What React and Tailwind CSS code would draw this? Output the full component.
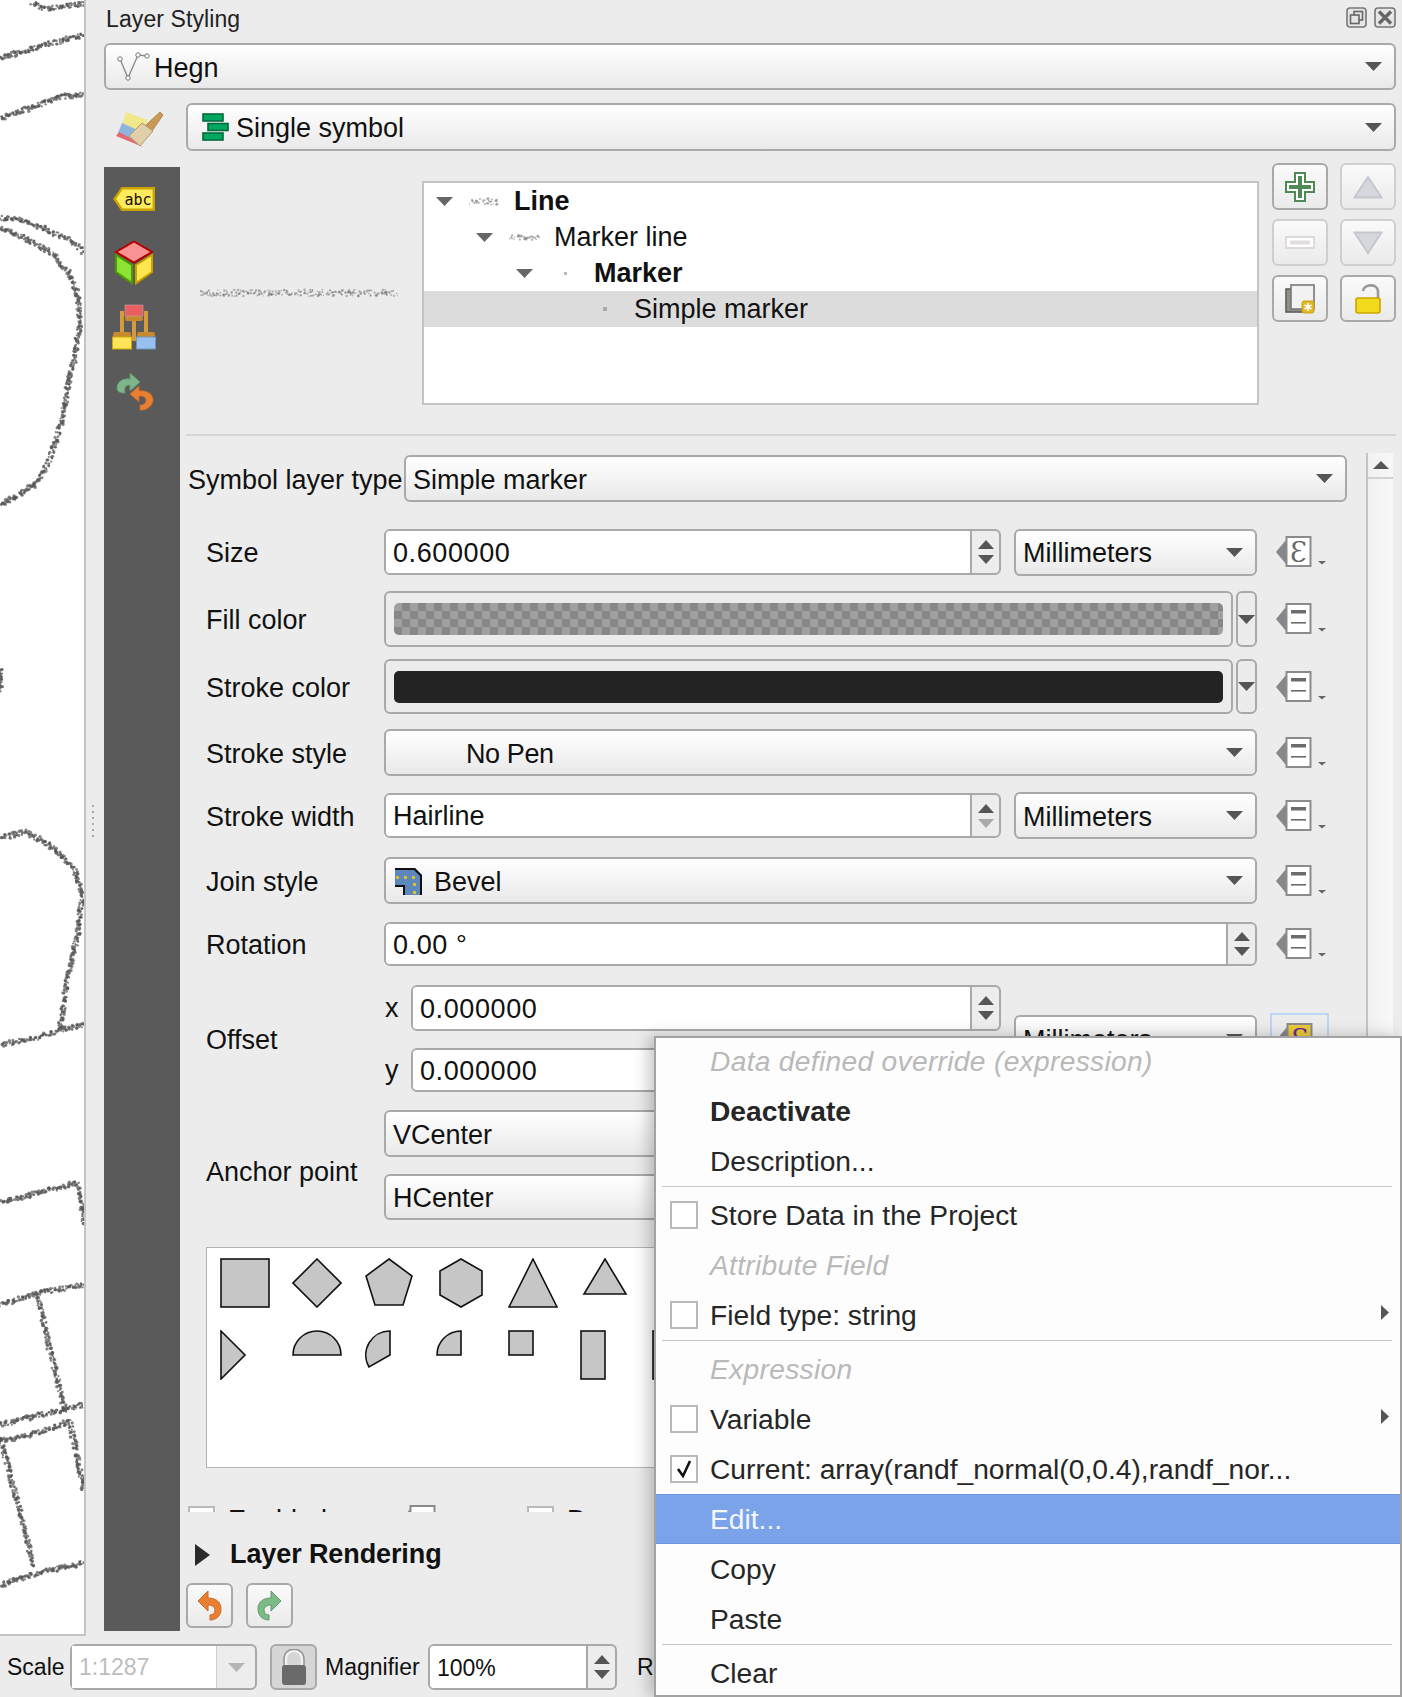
const FONT = { fontFamily: '"Liberation Sans", Arial, sans-serif' }

// seeded random so the stippled lines stay put between renders
function rng(seed) {
  let s = seed
  return () => {
    s = (s * 16807) % 2147483647
    return s / 2147483647
  }
}

function stipple(points, seed, jitter = 2.4, step = 0.8, r = 1.35) {
  const rand = rng(seed)
  const dots = []
  for (let i = 0; i < points.length - 1; i++) {
    const [x1, y1] = points[i]
    const [x2, y2] = points[i + 1]
    const len = Math.hypot(x2 - x1, y2 - y1)
    const n = Math.ceil(len / step)
    for (let k = 0; k < n; k++) {
      const t = k / n
      dots.push({
        x: x1 + (x2 - x1) * t + (rand() - 0.5) * jitter * 2,
        y: y1 + (y2 - y1) * t + (rand() - 0.5) * jitter * 2,
        r: r * (0.7 + rand() * 0.6),
      })
    }
  }
  return dots
}

const MAP_LINES = [
  [[33, 3], [45, 9], [60, 7], [84, 3]],
  [[0, 58], [20, 52], [45, 45], [65, 40], [84, 35]],
  [[0, 118], [30, 108], [60, 97], [84, 94]],
  [[0, 218], [17, 219], [40, 227], [70, 240], [84, 252]],
  [[0, 228], [25, 238], [50, 252], [68, 272], [78, 295], [80, 325], [75, 355], [68, 385], [62, 420], [50, 460], [35, 485], [15, 497], [0, 505]],
  [[0, 668], [1, 690]],
  [[0, 838], [25, 832], [50, 845], [75, 870], [82, 895], [78, 935], [68, 975], [60, 1028]],
  [[0, 1045], [40, 1037], [60, 1030], [84, 1025]],
  [[0, 1203], [40, 1192], [76, 1183], [81, 1200], [84, 1225]],
  [[0, 1305], [40, 1292], [84, 1285]],
  [[38, 1295], [50, 1350], [65, 1410]],
  [[0, 1425], [40, 1415], [84, 1405]],
  [[0, 1442], [40, 1432], [70, 1421], [84, 1491]],
  [[0, 1437], [20, 1512], [33, 1566]],
  [[0, 1585], [33, 1574], [84, 1563]],
]

function MapCanvas() {
  return (
    <svg width="84" height="1634" className="block">
      {MAP_LINES.map((line, i) =>
        stipple(line, 97 + i * 131).map((d, j) => (
          <circle key={`${i}-${j}`} cx={d.x} cy={d.y} r={d.r} fill="#555" opacity="0.72" />
        ))
      )}
    </svg>
  )
}

function Squiggle({ width, height, seed, r = 1 }) {
  const dots = stipple([[2, height / 2], [width - 2, height / 2]], seed, height / 3, 0.8, r)
  return (
    <svg width={width} height={height} className="block shrink-0">
      {dots.map((d, i) => <circle key={i} cx={d.x} cy={d.y} r={d.r} fill="#777" opacity="0.55" />)}
    </svg>
  )
}

const Caret = ({ color = '#555' }) => (
  <svg width="17" height="9" viewBox="0 0 17 9" className="block shrink-0"><path d="M0 0H17L8.5 9Z" fill={color} /></svg>
)

const Label = ({ children }) => <div className="w-[178px] shrink-0 pt-[3px] whitespace-nowrap">{children}</div>

function Combo({ className, children, pad = 'pl-[7px]' }) {
  return (
    <div className={`flex items-center justify-between rounded-[6px] border-2 border-[#a9a9a9] bg-gradient-to-b from-white to-[#e9e9e9] pr-[12px] ${pad} ${className}`}>
      <div className="flex items-center pt-[3px]">{children}</div>
      <Caret />
    </div>
  )
}

function Spin({ className, value, lowDim, numeric }) {
  return (
    <div className={`flex items-stretch rounded-[6px] border-2 border-[#a9a9a9] bg-[#ededed] ${className}`}>
      <div className={`flex-1 flex items-center bg-white rounded-l-[4px] pl-[7px] pt-[2px] border-r-2 border-[#a9a9a9] ${numeric ? 'tracking-[0.6px]' : ''}`}>{value}</div>
      <div className="w-[27px] flex flex-col items-center justify-center gap-[6px]">
        <svg width="16" height="9" viewBox="0 0 16 9" className="block"><path d="M0 9H16L8 0Z" fill="#555" /></svg>
        <svg width="16" height="9" viewBox="0 0 16 9" className="block"><path d="M0 0H16L8 9Z" fill={lowDim ? '#aaa' : '#555'} /></svg>
      </div>
    </div>
  )
}

function DDIcon({ expr }) {
  return (
    <svg width="52" height="34" viewBox="0 0 52 34" className="block shrink-0">
      <path d="M0 17L10 5V29Z" fill="#85878a" />
      <rect x="10.5" y="2" width="24" height="29" fill="#fff" stroke="#8b8b8b" strokeWidth="2" />
      {expr ? (
        <text x="22.5" y="27" textAnchor="middle" fontFamily="DejaVu Serif, serif" fontSize="27" fill="#666">Ɛ</text>
      ) : (
        <g>
          <rect x="15" y="8" width="15" height="3.5" fill="#6b6b6b" />
          <rect x="15" y="20" width="15" height="1.6" fill="#6b6b6b" />
        </g>
      )}
      <path d="M42 26H50L46 29.5Z" fill="#666" />
    </svg>
  )
}

function ToolBtn({ dim, children }) {
  return (
    <div className={`w-[56px] h-[47px] flex items-center justify-center rounded-[6px] border-2 bg-gradient-to-b from-[#fafafa] to-[#eaeaea] ${dim ? 'border-[#cfcfcf]' : 'border-[#a9a9a9]'}`}>
      {children}
    </div>
  )
}

const TREE = [
  { label: 'Line', bold: true, pad: 'pl-[12px]', icon: <Squiggle width={32} height={9} seed={11} />, arrow: true },
  { label: 'Marker line', pad: 'pl-[52px]', icon: <Squiggle width={32} height={7} seed={29} />, arrow: true },
  { label: 'Marker', bold: true, pad: 'pl-[92px]', icon: <div className="w-[3px] h-[3px] mx-auto bg-[#bbb]" />, arrow: true },
  { label: 'Simple marker', pad: 'pl-[132px]', icon: <div className="w-[4px] h-[4px] mx-auto bg-[#aaa]" />, selected: true },
]

const SYMBOLS = [
  <rect x="1" y="1" width="48" height="48" />,
  <path d="M25 1L49 25L25 49L1 25Z" />,
  <path d="M25 1L48 18L39 47H11L2 18Z" />,
  <path d="M25 1L46 13V37L25 49L4 37V13Z" />,
  <path d="M25 1L49 49H1Z" />,
  <path d="M25 1L46 36H4Z" />,
  <path d="M25 1L49 25L25 49Z" />,
  <path d="M1 1L25 25L1 49Z" />,
  <path d="M1 25A24 24 0 0 1 49 25Z" />,
  <path d="M26 1V25L5 37A24 24 0 0 1 26 1Z" />,
  <path d="M25 1V25H1A24 24 0 0 1 25 1Z" />,
  <rect x="1" y="1" width="24" height="24" />,
  <rect x="1" y="1" width="24" height="48" />,
  <rect x="1" y="1" width="24" height="48" />,
]

const MENU = [
  { label: 'Data defined override (expression)', off: true },
  { label: 'Deactivate', bold: true },
  { label: 'Description...', rule: true },
  { label: 'Store Data in the Project', box: true },
  { label: 'Attribute Field', off: true },
  { label: 'Field type: string', box: true, sub: true, rule: true },
  { label: 'Expression', off: true },
  { label: 'Variable', box: true, sub: true },
  { label: 'Current: array(randf_normal(0,0.4),randf_nor...', box: true, checked: true },
  { label: 'Edit...', hot: true },
  { label: 'Copy' },
  { label: 'Paste', rule: true },
  { label: 'Clear' },
]

function ContextMenu() {
  return (
    <div className="absolute left-[654px] top-[1036px] w-[748px] h-[661px] bg-[#fdfdfd] border-2 border-[#a2a2a2] shadow-[-6px_0_14px_rgba(0,0,0,0.22)] text-[28.2px] text-[#262626]">
      <div className="-mt-[2px]">
        {MENU.map(item => (
          <div key={item.label}>
            <div className={`relative h-[50px] flex items-center pl-[54px] ${item.hot ? 'bg-[#7ba3ea] text-[#f4f7fd] border-y border-[#6f97df]' : ''}`}>
              {item.box && (
                <div className="absolute left-[14px] top-[11px] w-[28px] h-[28px] border-2 border-[#b9b9b9] bg-white flex items-center justify-center">
                  {item.checked && (
                    <svg width="18" height="20" viewBox="0 0 18 20"><path d="M3 10L8 17L15 2" fill="none" stroke="#111" strokeWidth="2.6" /></svg>
                  )}
                </div>
              )}
              <span className={`whitespace-nowrap ${item.off ? 'italic text-[#b9b9b9] tracking-[0.3px]' : ''} ${item.bold ? 'font-bold' : ''}`}>{item.label}</span>
              {item.sub && (
                <svg width="8" height="15" viewBox="0 0 8 15" className="absolute right-[11px] top-[15px]"><path d="M0 0L8 7.5L0 15Z" fill="#555" /></svg>
              )}
            </div>
            {item.rule && <div className="ml-[6px] mr-[8px] mb-[3px] h-[1px] bg-[#c6c6c6]" />}
          </div>
        ))}
      </div>
    </div>
  )
}

export default function App() {
  return (
    <div className="relative w-[1402px] h-[1697px] overflow-hidden bg-[#ececec] text-[27px] text-[#111] leading-none" style={FONT}>
      <div className="flex h-[1636px]">
        <div className="w-[86px] h-[1636px] shrink-0 bg-white border-r-2 border-b-2 border-[#c4c4c4]">
          <MapCanvas />
        </div>

        <div className="relative flex-1 flex flex-col pl-[18px] pr-[6px]">
          {/* grip between the map and the dock */}
          <div className="absolute left-[6px] top-[805px] flex flex-col gap-[4px]">
            {[0, 1, 2, 3, 4, 5].map(i => <div key={i} className="w-[2px] h-[2px] bg-[#a8a8a8]" />)}
          </div>

          <div className="h-[43px] flex items-start justify-between pt-[8px]">
            <div className="pl-[2px] text-[23px] tracking-[0.1px] text-[#222]">Layer Styling</div>
            <div className="flex gap-[7px] -mt-[1px]">
              <svg width="21" height="21" viewBox="0 0 21 21" className="block">
                <rect x="1" y="1" width="19" height="19" rx="3" fill="#e6e6e6" stroke="#777" strokeWidth="1.6" />
                <rect x="8" y="4.5" width="8.5" height="8.5" fill="none" stroke="#666" strokeWidth="1.6" />
                <rect x="4.5" y="8" width="8.5" height="8.5" fill="#e6e6e6" stroke="#666" strokeWidth="1.6" />
              </svg>
              <svg width="22" height="21" viewBox="0 0 22 21" className="block">
                <rect x="1" y="1" width="20" height="19" rx="3" fill="#e6e6e6" stroke="#777" strokeWidth="1.6" />
                <path d="M5 4.5L17 16.5M17 4.5L5 16.5" stroke="#666" strokeWidth="3.4" />
              </svg>
            </div>
          </div>

          <Combo className="h-[47px]">
            <svg width="34" height="30" viewBox="0 0 34 30" className="block mr-[4px] ml-[3px] -mt-[3px]">
              <path d="M4 7L12 26L22 3L32 4" fill="none" stroke="#888" strokeWidth="1.3" />
              <circle cx="4" cy="7" r="2.2" fill="#fff" stroke="#777" />
              <circle cx="12" cy="26" r="2.2" fill="#fff" stroke="#777" />
              <circle cx="22" cy="3" r="2.2" fill="#fff" stroke="#777" />
              <circle cx="31" cy="4" r="2.2" fill="#fff" stroke="#777" />
            </svg>
            <span>Hegn</span>
          </Combo>

          <div className="flex items-center mt-[13px] h-[48px]">
            <svg width="48" height="38" viewBox="0 0 48 38" className="block ml-[12px] mr-[22px] mt-[6px] shrink-0">
              <path d="M10 1L32 9L24 22L6 14Z" fill="#f0e88a" />
              <path d="M6 12L24 20L17 30L2 22Z" fill="#8fb4e0" />
              <path d="M3 21L18 29L27 36L0 25Z" fill="#e06a70" />
              <path d="M30 14L44 1L47 4L36 20Z" fill="#c99a55" stroke="#a67a38" strokeWidth="0.8" />
              <path d="M13 25L26 12L37 20L24 35Z" fill="#e0cfa8" stroke="#b39a6b" strokeWidth="1" />
            </svg>
            <Combo className="flex-1 h-[48px]">
              <svg width="27" height="28" viewBox="0 0 27 28" className="block mr-[7px] ml-[7px] -mt-[3px]">
                <rect x="1" y="1" width="20" height="7" fill="#00a860" stroke="#006a3c" strokeWidth="1.6" />
                <rect x="6" y="10.5" width="20" height="7" fill="#00a860" stroke="#006a3c" strokeWidth="1.6" />
                <rect x="1" y="20" width="20" height="7" fill="#00a860" stroke="#006a3c" strokeWidth="1.6" />
              </svg>
              <span>Single symbol</span>
            </Combo>
          </div>

          <div className="flex mt-[16px] h-[1464px]">
            {/* dark page list */}
            <div className="w-[76px] shrink-0 bg-[#5a5a5a] flex flex-col items-start pt-[20px]">
              <svg width="42" height="24" viewBox="0 0 42 24" className="block ml-[9px]">
                <path d="M9 1.2H40.8V22.8H9L1.5 12Z" fill="#ffea5c" stroke="#c9a400" strokeWidth="2.4" />
                <text x="25" y="18" textAnchor="middle" fontFamily="DejaVu Sans Mono, monospace" fontSize="15" fill="#111">abc</text>
              </svg>
              <svg width="40" height="45" viewBox="0 0 40 45" className="block mt-[29px] ml-[10px]">
                <path d="M20 1.5L38 12L20 22.5L2 12Z" fill="#f99393" stroke="#b50000" strokeWidth="2" />
                <path d="M2 15L18 25V43L2 32Z" fill="#8ce334" stroke="#4f9a00" strokeWidth="2" />
                <path d="M22 25L38 15V32L22 43Z" fill="#ffe64f" stroke="#c8a000" strokeWidth="2" />
              </svg>
              <svg width="44" height="46" viewBox="0 0 44 46" className="block mt-[19px] ml-[8px]">
                <rect x="8" y="7" width="4" height="26" fill="#d39a3e" />
                <rect x="32" y="7" width="4" height="26" fill="#d39a3e" />
                <rect x="20" y="15" width="4" height="22" fill="#d39a3e" />
                <rect x="13" y="12" width="18" height="5" rx="2" fill="#c98a2e" />
                <rect x="13" y="1" width="18" height="11" fill="#e85f5f" stroke="#c9a0a0" strokeWidth="0.6" />
                <rect x="1" y="28" width="18" height="5" rx="2" fill="#c98a2e" />
                <rect x="25" y="28" width="18" height="5" rx="2" fill="#c98a2e" />
                <rect x="0.5" y="33" width="19" height="12" fill="#ffe45c" stroke="#d0a800" />
                <rect x="24.5" y="33" width="19" height="12" fill="#97c0ee" stroke="#6f93c0" />
              </svg>
              <svg width="38" height="38" viewBox="0 0 38 38" className="block mt-[23px] ml-[12px]">
                <path d="M1 15C1 8 8 5 14 6V0L24 9L14 18V12C9 12 8 15 9 20C4 20 1 19 1 15Z" fill="#7db68a" stroke="#5f9a6e" strokeWidth="0.8" />
                <path d="M37 27C37 33 30 38 24 37V32C28 32 30 30 30 27C30 24 27 23 23 23V29L14 21L23 13V18C31 17 37 21 37 27Z" fill="#e87f33" stroke="#c86a24" strokeWidth="0.8" />
              </svg>
            </div>

            <div className="flex-1 flex flex-col pl-[6px]">
              <div className="h-[269px] shrink-0 flex border-b-2 border-[#d6d6d6]">
                <div className="w-[236px] shrink-0 pl-[12px] pt-[121px]">
                  <Squiggle width={200} height={10} seed={71} r={1} />
                </div>
                <div className="w-[837px] h-[224px] mt-[14px] shrink-0 bg-white border-2 border-[#c4c4c4]">
                  {TREE.map(row => (
                    <div key={row.label} className={`h-[36px] flex items-center ${row.pad} ${row.selected ? 'bg-[#dcdcdc]' : ''}`}>
                      <div className="w-[20px] shrink-0">{row.arrow && <Caret color="#666" />}</div>
                      <div className="w-[32px] ml-[13px] shrink-0">{row.icon}</div>
                      <span className={`ml-[13px] whitespace-nowrap ${row.bold ? 'font-bold' : ''}`}>{row.label}</span>
                    </div>
                  ))}
                </div>
                <div className="ml-[13px] -mt-[4px] grid grid-cols-[56px_56px] gap-x-[12px] gap-y-[9px] content-start">
                  <ToolBtn>
                    <svg width="30" height="30" viewBox="0 0 30 30"><path d="M10 1H20V10H29V20H20V29H10V20H1V10H10Z" fill="#fff" stroke="#4f8a54" strokeWidth="2" /><path d="M13 4H17V13H26V17H17V26H13V17H4V13H13Z" fill="#4f8a54" /></svg>
                  </ToolBtn>
                  <ToolBtn dim>
                    <svg width="30" height="24" viewBox="0 0 30 24"><path d="M15 2L28.5 22.5H1.5Z" fill="#d4d8dc" stroke="#c4c8cc" strokeWidth="2" /></svg>
                  </ToolBtn>
                  <ToolBtn dim>
                    <svg width="30" height="14" viewBox="0 0 30 14"><rect x="1" y="1" width="28" height="11" fill="#fff" stroke="#dedada" strokeWidth="2" /><rect x="5" y="4.5" width="20" height="4" fill="#e2dcdc" /></svg>
                  </ToolBtn>
                  <ToolBtn dim>
                    <svg width="30" height="24" viewBox="0 0 30 24"><path d="M15 22L28.5 1.5H1.5Z" fill="#d4d8dc" stroke="#c4c8cc" strokeWidth="2" /></svg>
                  </ToolBtn>
                  <ToolBtn>
                    <svg width="30" height="30" viewBox="0 0 30 30">
                      <rect x="1" y="5" width="23" height="23" fill="#8f8f88" stroke="#5f5f58" strokeWidth="1.6" />
                      <rect x="6" y="1" width="23" height="24" fill="#f2f2f2" stroke="#777" strokeWidth="1.6" />
                      <rect x="17" y="17" width="12" height="12" rx="2" fill="#e0b92a" stroke="#c9a215" />
                      <path d="M23 19V27M19.5 21L26.5 25M26.5 21L19.5 25" stroke="#fff" strokeWidth="1.5" />
                    </svg>
                  </ToolBtn>
                  <ToolBtn>
                    <svg width="26" height="31" viewBox="0 0 26 31">
                      <path d="M8 8C9 1 22 0 23 8V15" fill="none" stroke="#999" strokeWidth="2.6" />
                      <rect x="1" y="15" width="24" height="15" rx="2" fill="#f2da1c" stroke="#c9a600" strokeWidth="1.6" />
                    </svg>
                  </ToolBtn>
                </div>
              </div>

              <div className="flex h-[1076px]">
                <div className="w-[1180px] shrink-0 overflow-hidden">
                  <div className="flex items-center mt-[19px] pl-[2px]">
                    <div className="w-[216px] shrink-0 pt-[3px] whitespace-nowrap">Symbol layer type</div>
                    <Combo className="w-[943px] h-[47px]">Simple marker</Combo>
                  </div>

                  <div className="flex items-center mt-[27px] h-[46px] pl-[20px]">
                    <Label>Size</Label>
                    <Spin className="w-[617px] h-[46px]" value="0.600000" numeric />
                    <Combo className="ml-[13px] w-[243px] h-[47px]">Millimeters</Combo>
                    <div className="ml-[19px]"><DDIcon expr /></div>
                  </div>

                  <div className="flex items-center mt-[16px] h-[56px] pl-[20px]">
                    <Label>Fill color</Label>
                    <div className="w-[849px] h-[56px] rounded-[6px] border-2 border-[#a9a9a9] px-[8px] py-[10px]">
                      <div className="h-[32px] rounded-[5px] bg-[repeating-conic-gradient(#878787_0_25%,#a0a0a0_0_50%)] bg-[length:16px_16px]" />
                    </div>
                    <div className="ml-[3px] w-[21px] h-[56px] rounded-[6px] border-2 border-[#a9a9a9] flex items-center justify-center"><Caret /></div>
                    <div className="ml-[19px]"><DDIcon /></div>
                  </div>

                  <div className="flex items-center mt-[12px] h-[55px] pl-[20px]">
                    <Label>Stroke color</Label>
                    <div className="w-[849px] h-[55px] rounded-[6px] border-2 border-[#a9a9a9] px-[8px] py-[10px]">
                      <div className="h-[32px] rounded-[5px] bg-[#232323]" />
                    </div>
                    <div className="ml-[3px] w-[21px] h-[55px] rounded-[6px] border-2 border-[#a9a9a9] flex items-center justify-center"><Caret /></div>
                    <div className="ml-[19px]"><DDIcon /></div>
                  </div>

                  <div className="flex items-center mt-[15px] h-[47px] pl-[20px]">
                    <Label>Stroke style</Label>
                    <Combo className="w-[873px] h-[47px]" pad="pl-[80px]"><span className="tracking-[-0.4px]">No Pen</span></Combo>
                    <div className="ml-[19px]"><DDIcon /></div>
                  </div>

                  <div className="flex items-center mt-[17px] h-[45px] pl-[20px]">
                    <Label>Stroke width</Label>
                    <Spin className="w-[617px] h-[45px]" value="Hairline" lowDim />
                    <Combo className="ml-[13px] w-[243px] h-[47px]">Millimeters</Combo>
                    <div className="ml-[19px]"><DDIcon /></div>
                  </div>

                  <div className="flex items-center mt-[19px] h-[47px] pl-[20px]">
                    <Label>Join style</Label>
                    <Combo className="w-[873px] h-[47px]">
                      <svg width="28" height="28" viewBox="0 0 28 28" className="block mr-[11px] ml-[2px] -mt-[3px]">
                        <path d="M0 1H20L27 8V28H10V18H0Z" fill="#5e87bd" />
                        <path d="M0 1H20L27 8V28H25V9L19 3H0ZM0 18H10V28H8V20H0Z" fill="#111" />
                        <path d="M1 9h3v3H1zM9 9h3v3H9zM17 9h3v3h-3zM18 16h3v3h-3zM18 24h3v3h-3z" fill="#d8c22c" />
                      </svg>
                      Bevel
                    </Combo>
                    <div className="ml-[19px]"><DDIcon /></div>
                  </div>

                  <div className="flex items-center mt-[18px] h-[44px] pl-[20px]">
                    <Label>Rotation</Label>
                    <Spin className="w-[873px] h-[44px]" value="0.00 °" numeric />
                    <div className="ml-[19px]"><DDIcon /></div>
                  </div>

                  <div className="flex mt-[19px] h-[107px] pl-[20px]">
                    <div className="w-[178px] shrink-0 self-center mt-[3px]">Offset</div>
                    <div className="w-[617px] shrink-0 flex flex-col justify-between">
                      <div className="flex items-center">
                        <div className="w-[27px] pl-[1px]">x</div>
                        <Spin className="w-[590px] h-[46px]" value="0.000000" numeric />
                      </div>
                      <div className="flex items-center">
                        <div className="w-[27px] pl-[1px]">y</div>
                        <Spin className="w-[590px] h-[44px]" value="0.000000" numeric />
                      </div>
                    </div>
                    <Combo className="ml-[13px] w-[243px] h-[47px] self-center">Millimeters</Combo>
                    <div className="ml-[13px] self-center w-[59px] h-[52px] border-2 border-[#bcd6f5] flex items-start pl-[5px] pt-[7px]">
                      <svg width="42" height="34" viewBox="0 0 42 34" className="block">
                        <path d="M0 17L10 5V29Z" fill="#85878a" />
                        <rect x="10.5" y="2" width="24" height="29" fill="#ecc93a" stroke="#8b8b8b" strokeWidth="2" />
                        <text x="22.5" y="27" textAnchor="middle" fontFamily="DejaVu Serif, serif" fontSize="27" fill="#6a2c8c">Ɛ</text>
                      </svg>
                    </div>
                  </div>

                  <div className="flex mt-[18px] h-[110px] pl-[20px]">
                    <div className="w-[178px] shrink-0 self-center mt-[14px] whitespace-nowrap">Anchor point</div>
                    <div className="w-[873px] flex flex-col justify-between">
                      <Combo className="h-[47px]">VCenter</Combo>
                      <Combo className="h-[46px]">HCenter</Combo>
                    </div>
                  </div>

                  <div className="mt-[27px] ml-[20px] w-[1051px] h-[221px] bg-white border border-[#b4b4b4] pl-[13px] pt-[10px] grid grid-cols-[repeat(7,72px)] auto-rows-[72px]">
                    {SYMBOLS.map((shape, i) => (
                      <svg key={i} width="50" height="50" viewBox="0 0 50 50" className="block" fill="#c6c6c6" stroke="#111" strokeWidth="1.6">{shape}</svg>
                    ))}
                  </div>

                  <div className="flex items-start mt-[38px] h-[30px] pl-[2px]">
                    <div className="w-[27px] h-[27px] border-2 border-[#b9b9b9] bg-white" />
                    <span className="ml-[13px] w-[172px] pt-[1px]">Enabled</span>
                    <div className="-mt-[2px]"><DDIcon /></div>
                    <div className="ml-[75px] w-[27px] h-[27px] border-2 border-[#b9b9b9] bg-white" />
                    <span className="ml-[13px] pt-[1px]">Draw effects</span>
                  </div>
                </div>

                <div className="w-[27px] mt-[17px] border-l-2 border-[#c4c4c4] bg-gradient-to-r from-[#f1f1f1] to-[#f8f8f8]">
                  <div className="h-[26px] flex items-center justify-center border-b-2 border-[#d2d2d2]">
                    <svg width="16" height="8" viewBox="0 0 16 8" className="block"><path d="M0 8H16L8 0Z" fill="#555" /></svg>
                  </div>
                </div>
              </div>

              <div className="h-[71px] shrink-0 flex items-center pl-[9px] pt-[14px]">
                <svg width="15" height="22" viewBox="0 0 15 22" className="block"><path d="M0 0L15 11L0 22Z" fill="#2a2a2a" /></svg>
                <span className="ml-[20px] font-bold tracking-[-0.1px]">Layer Rendering</span>
              </div>

              <div className="flex gap-[13px]">
                <div className="w-[47px] h-[45px] flex items-center justify-center rounded-[6px] border-2 border-[#a9a9a9] bg-gradient-to-b from-[#fafafa] to-[#eaeaea]">
                  <svg width="25" height="30" viewBox="0 0 25 30"><path d="M11 0V7C19 7 24 11 24 18C24 25 19 29 13 29V24C16 24 18 22 18 19C18 16 15 14 11 14V20L1 10Z" fill="#e87f33" stroke="#c86a24" /></svg>
                </div>
                <div className="w-[47px] h-[45px] flex items-center justify-center rounded-[6px] border-2 border-[#a9a9a9] bg-gradient-to-b from-[#fafafa] to-[#eaeaea]">
                  <svg width="25" height="30" viewBox="0 0 25 30"><path d="M14 0V7C6 7 1 11 1 18C1 25 6 29 12 29V24C9 24 7 22 7 19C7 16 10 14 14 14V20L24 10Z" fill="#7dbb86" stroke="#5f9a6e" /></svg>
                </div>
              </div>
            </div>
          </div>
        </div>
      </div>

      <div className="h-[61px] flex items-start pt-[8px] pl-[7px] text-[23px]">
        <div className="w-[63px] h-[46px] flex items-center">Scale</div>
        <div className="w-[187px] h-[46px] flex rounded-[6px] border-2 border-[#a9a9a9] bg-[#ededed]">
          <div className="w-[145px] flex items-center pl-[7px] bg-white text-[#bdbdbd] border-r border-[#cfcfcf]">1:1287</div>
          <div className="flex-1 flex items-center justify-center"><Caret color="#b5b5b5" /></div>
        </div>
        <div className="ml-[13px] w-[47px] h-[46px] flex items-center justify-center rounded-[6px] border-2 border-[#a9a9a9] bg-[#d6d6d6]">
          <svg width="26" height="36" viewBox="0 0 26 36">
            <path d="M5 17V10C5 -1 21 -1 21 10V17" fill="none" stroke="#f2f2f2" strokeWidth="2.4" />
            <path d="M3 17V10C3 -3 23 -3 23 10V17" fill="none" stroke="#8f8f8f" strokeWidth="1.4" />
            <rect x="1" y="16" width="24" height="20" rx="3" fill="#6a6a6a" />
          </svg>
        </div>
        <div className="ml-[8px] w-[103px] h-[46px] flex items-center whitespace-nowrap">Magnifier</div>
        <Spin className="w-[189px] h-[46px] text-[23px]" value="100%" />
        <div className="ml-[20px] h-[46px] flex items-center">Render</div>
      </div>

      <ContextMenu />
    </div>
  )
}
